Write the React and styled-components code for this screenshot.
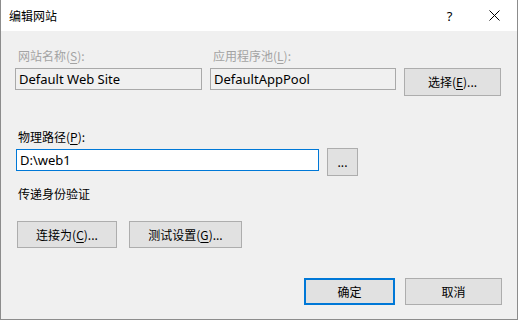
import React from "react";
import styled, { createGlobalStyle } from "styled-components";

const Global = createGlobalStyle`
  html, body { margin: 0; padding: 0; background: #ffffff; }
  body { font-family: "Noto Sans", "Noto Sans CJK SC", sans-serif; font-size: 12px; color: #000; }
  * { box-sizing: border-box; }
`;

const Window = styled.div`
  width: 518px;
  height: 320px;
  display: flex;
  flex-direction: column;
  background: #f0f0f0;
  border: 1px solid #8c8c8c;
  border-top: none;
`;

const TitleBar = styled.div`
  height: 31px;
  flex: none;
  background: #ffffff;
  display: flex;
  align-items: center;
  padding-left: 8px;
`;

const Title = styled.div`
  flex: 1;
  font-size: 12px;
  line-height: 16px;
  font-family: "Noto Sans CJK SC", sans-serif;
`;

const TitleButton = styled.div`
  width: 46px;
  height: 31px;
  display: flex;
  align-items: center;
  justify-content: center;
  font-size: 13px;
  font-family: "Noto Sans", sans-serif;
  color: #000;
  padding-left: ${(p) => p.$pl || 0}px;
`;

const Content = styled.div`
  flex: 1;
  display: flex;
  flex-direction: column;
  padding: 0 15px 0 14px;
`;

const TopGrid = styled.div`
  margin-top: 17px;
  display: grid;
  grid-template-columns: 187px 186px 97px;
  column-gap: 8px;
  row-gap: 4px;
  align-items: start;
`;

const Label = styled.div`
  font-family: "Noto Sans CJK SC", sans-serif;
  font-size: 12px;
  line-height: 16px;
  padding-left: 3px;
  color: ${(p) => (p.$disabled ? "#a3a3a3" : "#000")};
  margin-top: ${(p) => p.$mt || 0}px;
`;

const U = styled.span`
  text-decoration: underline;
  text-underline-offset: 2px;
`;

const TextBox = styled.div`
  height: 22px;
  width: ${(p) => p.$w}px;
  border: 1px solid ${(p) => (p.$focus ? "#0078d7" : "#a9a9a9")};
  background: ${(p) => (p.$focus ? "#ffffff" : "#f0f0f0")};
  padding-left: 3px;
  display: flex;
  align-items: center;
  font-size: 13px;
  font-family: "Noto Sans", "Noto Sans CJK SC", sans-serif;
`;

const Button = styled.div`
  width: ${(p) => p.$w}px;
  height: ${(p) => p.$h || 27}px;
  background: #e1e1e1;
  border: ${(p) => (p.$default ? "2px solid #0078d7" : "1px solid #adadad")};
  display: flex;
  align-items: center;
  justify-content: center;
  font-family: "Noto Sans CJK SC", sans-serif;
  font-size: 12px;
  color: #000;
  padding-bottom: 1px;
`;

const PathRow = styled.div`
  margin-top: 4px;
  display: flex;
  align-items: flex-start;
  gap: 8px;
  margin-left: 1px;
`;

const Nudge = styled.div`
  margin-top: -1px;
`;

const ActionRow = styled.div`
  display: flex;
  gap: ${(p) => p.$gap}px;
  margin-top: ${(p) => p.$mt}px;
  margin-left: 2px;
  justify-content: ${(p) => (p.$end ? "flex-end" : "flex-start")};
`;

const CloseIcon = () => (
  <svg width="11" height="11" viewBox="0 0 11 11">
    <path d="M0.5 0.5 L10.5 10.5 M10.5 0.5 L0.5 10.5" stroke="#000" strokeWidth="1" fill="none" />
  </svg>
);

export default function App() {
  return (
    <>
      <Global />
      <Window>
        <TitleBar>
          <Title>编辑网站</Title>
          <TitleButton $pl={3}>?</TitleButton>
          <TitleButton>
            <CloseIcon />
          </TitleButton>
        </TitleBar>
        <Content>
          <TopGrid>
            <Label $disabled>
              网站名称(<U>S</U>):
            </Label>
            <Label $disabled>
              应用程序池(<U>L</U>):
            </Label>
            <div />
            <TextBox $w={187}>Default Web Site</TextBox>
            <TextBox $w={186}>DefaultAppPool</TextBox>
            <Button $w={97} $h={28}>
              选择(<U>E</U>)...
            </Button>
          </TopGrid>
          <Label $mt={33}>
            物理路径(<U>P</U>):
          </Label>
          <PathRow>
            <TextBox $w={303} $focus>
              D:\web1
            </TextBox>
            <Nudge>
              <Button $w={31} $h={28}>
                ...
              </Button>
            </Nudge>
          </PathRow>
          <Label $mt={10}>传递身份验证</Label>
          <ActionRow $gap={12} $mt={19}>
            <Button $w={100}>
              连接为(<U>C</U>)...
            </Button>
            <Button $w={113}>
              测试设置(<U>G</U>)...
            </Button>
          </ActionRow>
          <ActionRow $gap={10} $mt={30} $end>
            <Button $w={91} $default>
              确定
            </Button>
            <Button $w={97}>取消</Button>
          </ActionRow>
        </Content>
      </Window>
    </>
  );
}
